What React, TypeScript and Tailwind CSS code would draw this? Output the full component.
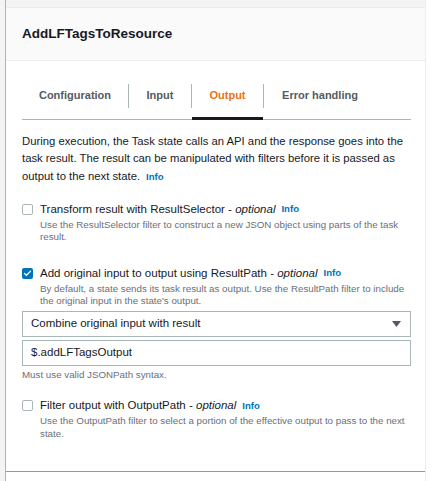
import { Check } from 'lucide-react';

const font = { fontFamily: '"Liberation Sans", Arial, sans-serif' };

function Info() {
	return <span className="inline-block text-[9.6px] leading-[12px] font-bold text-[#0073bb] ml-[6px]">Info</span>;
}

function Checkbox({ checked }: { checked?: boolean }) {
	return checked ? (
		<div className="w-[11px] h-[11px] rounded-[2px] bg-[#0073bb] flex items-center justify-center shrink-0">
			<Check className="w-[9px] h-[9px] text-white" strokeWidth={3.5} />
		</div>
	) : (
		<div className="w-[11px] h-[11px] rounded-[2px] border border-[#aab7b8] bg-white shrink-0" />
	);
}

function Option({ label, desc, checked }: { label: string; desc: string; checked?: boolean }) {
	return (
		<div>
			<div className="flex items-center h-[17px]">
				<Checkbox checked={checked} />
				<span className="ml-[7px] text-[11.5px] text-[#16191f] whitespace-nowrap">
					{label} - <i>optional</i>
				</span>
				<Info />
			</div>
			<p className="pl-[18px] text-[9.75px] leading-[12.5px] text-[#687078] mt-[1px]">{desc}</p>
		</div>
	);
}

const tabs = [
	{ name: 'Configuration', w: 'w-[106px]' },
	{ name: 'Input', w: 'w-[62px]' },
	{ name: 'Output', w: 'w-[71px]', active: true },
	{ name: 'Error handling', w: 'w-[112px]' },
];

export default function App() {
	return (
		<div className="w-[436px] h-[481px] bg-white flex overflow-hidden" style={font}>
			<div className="w-[5px] bg-[#f4f4f4] shrink-0" />
			<div className="w-[421px] border-l border-r border-l-[#aab7b8] border-r-[#eaeded] flex flex-col shrink-0">
				{/* top strip */}
				<div className="h-[8px] bg-[#f4f4f4] border-b border-[#eaeded]" />
				{/* header */}
				<div className="h-[53px] bg-[#fafafa] border-b border-[#eaeded] flex items-center pl-[16px]">
					<h1 className="text-[13.5px] font-bold text-[#16191f]">AddLFTagsToResource</h1>
				</div>

				{/* body */}
				<div className="h-[411px] border-b border-[#8d99a8] pl-[16px] pr-[14px] pt-[11px]">
					{/* tabs */}
					<div className="flex h-[48px] border-b border-[#aab7b8]">
						{tabs.map((tab, i) => (
							<div key={tab.name} className="flex items-center">
								{i > 0 && <div className="w-px h-[24px] bg-[#aab7b8]" />}
								<div className={`relative h-full flex items-center justify-center ${tab.w}`}>
									<span className={`text-[11px] font-bold ${tab.active ? 'text-[#ec7211]' : 'text-[#545b64]'}`}>
										{tab.name}
									</span>
									{tab.active && <div className="absolute left-0 right-0 bottom-[-1px] h-[3px] bg-[#16191f]" />}
								</div>
							</div>
						))}
					</div>

					<p className="mt-[13px] text-[11.3px] leading-[17.3px] text-[#16191f]">
						During execution, the Task state calls an API and the response goes into the task result. The result
						can be manipulated with filters before it is passed as output to the next state.
						<Info />
					</p>

					<div className="mt-[16px]">
						<Option
							label="Transform result with ResultSelector"
							desc="Use the ResultSelector filter to construct a new JSON object using parts of the task result."
						/>
					</div>

					<div className="mt-[21px]">
						<Option
							checked
							label="Add original input to output using ResultPath"
							desc="By default, a state sends its task result as output. Use the ResultPath filter to include the original input in the state's output."
						/>
					</div>

					<div className="mt-[3px] h-[26px] border border-[#aab7b8] flex items-center justify-between pl-[8px] pr-[9px]">
						<span className="text-[11.5px] text-[#16191f]">Combine original input with result</span>
						<svg width="9" height="6" viewBox="0 0 9 6">
							<path d="M0 0 H9 L4.5 6 Z" fill="#545b64" />
						</svg>
					</div>
					<div className="mt-[3px] h-[26px] border border-[#aab7b8] flex items-center pl-[8px]">
						<span className="text-[11.5px] text-[#16191f]">$.addLFTagsOutput</span>
					</div>
					<p className="mt-[3px] text-[9.75px] leading-[12.5px] text-[#687078]">Must use valid JSONPath syntax.</p>

					<div className="mt-[16px]">
						<Option
							label="Filter output with OutputPath"
							desc="Use the OutputPath filter to select a portion of the effective output to pass to the next state."
						/>
					</div>
				</div>
			</div>
		</div>
	);
}
